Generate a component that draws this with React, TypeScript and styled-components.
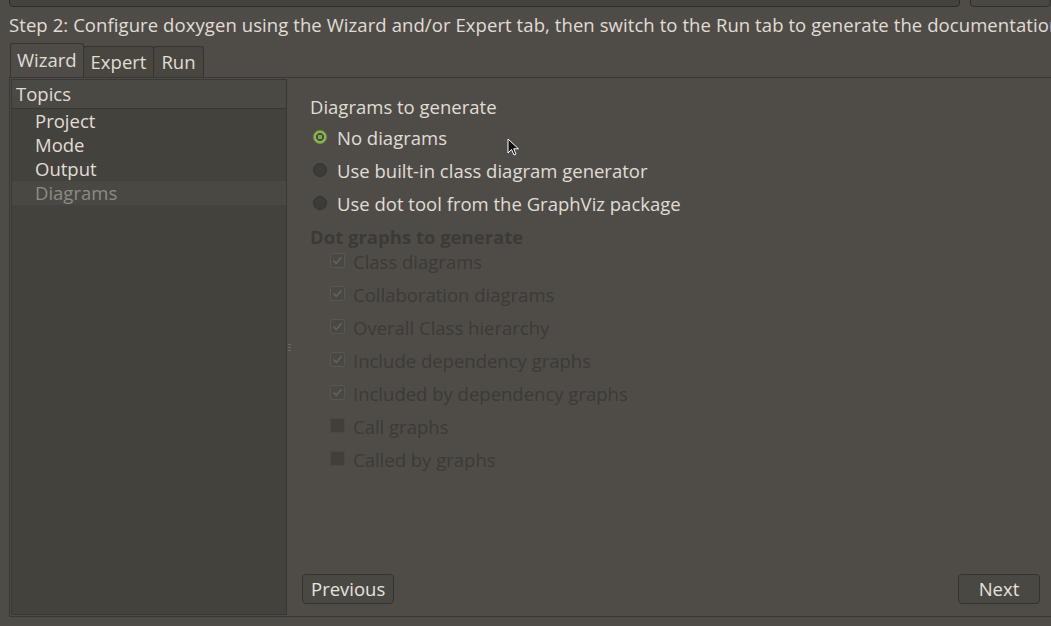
import React from "react";
import styled, { createGlobalStyle } from "styled-components";

const GlobalStyle = createGlobalStyle`
  html, body { margin: 0; padding: 0; background: #4f4c47; }
  body { font-family: "Open Sans", "Noto Sans", sans-serif; color: #e0ddd5; }
  * { box-sizing: border-box; }
`;

const Window = styled.div`
  position: relative;
  width: 1051px;
  height: 626px;
  overflow: hidden;
  background: #4f4c47;
  display: flex;
  flex-direction: column;
  padding-left: 9px;
  font-size: 18.5px;
`;

const TopRow = styled.div`
  height: 7px;
  display: flex;
  align-items: flex-end;
  gap: 10px;
  overflow: hidden;
`;

const PathField = styled.div`
  flex: none;
  width: 951px;
  height: 30px;
  border: 1px solid #2f2d29;
  border-radius: 4px;
  background: #45433e;
`;

const TopButton = styled.div`
  flex: none;
  width: 81px;
  height: 30px;
  border: 1px solid #2f2d29;
  border-radius: 4px;
  background: #4a4843;
`;

const StepLabel = styled.div`
  height: 36px;
  line-height: 36px;
  white-space: nowrap;
  letter-spacing: 0.08px;
`;

const TabBar = styled.div`
  display: flex;
  align-items: flex-end;
  height: 34px;
  padding-left: 1px;
`;

const Tab = styled.div<{ $active?: boolean }>`
  height: ${(p) => (p.$active ? 34 : 31)}px;
  padding: 0 ${(p) => (p.$active ? 6 : 7)}px;
  line-height: ${(p) => (p.$active ? 32 : 29)}px;
  background: ${(p) => (p.$active ? "#4f4c47" : "#48463f")};
  border: 1px solid #363430;
  border-bottom: none;
  border-radius: 3px 3px 0 0;
  margin-right: -1px;
  white-space: nowrap;
`;

const Pane = styled.div`
  height: 540px;
  display: flex;
  border: 1px solid #393733;
  border-right: none;
  padding: 1px 0 1px 1px;
`;

const Sidebar = styled.div`
  width: 276px;
  flex: none;
  background: #44423d;
  border: 1px solid #3a3834;
  display: flex;
  flex-direction: column;
`;

const SidebarHeader = styled.div`
  height: 29px;
  line-height: 28px;
  padding-left: 4px;
  background: #4b4944;
  border-bottom: 1px solid #393732;
`;

const TopicList = styled.div`
  display: flex;
  flex-direction: column;
`;

const TopicItem = styled.div<{ $selected?: boolean }>`
  height: 24px;
  line-height: 24px;
  padding-left: 23px;
  color: ${(p) => (p.$selected ? "#8e8b84" : "#e0ddd5")};
  background: ${(p) => (p.$selected ? "#4a4843" : "transparent")};
`;

const Splitter = styled.div`
  width: 14px;
  flex: none;
  display: flex;
  align-items: center;
  justify-content: flex-start;
  padding-left: 1px;
`;

const Grip = styled.div`
  width: 3px;
  height: 7px;
  background: repeating-linear-gradient(to bottom, #6a6760 0 1px, transparent 1px 3px);
`;

const Content = styled.div`
  flex: 1;
  display: flex;
  flex-direction: column;
  padding: 16px 10px 10px 1px;
`;

const Form = styled.div`
  display: flex;
  flex-direction: column;
  padding-left: 8px;
`;

const Heading = styled.div<{ $disabled?: boolean }>`
  height: ${(p) => (p.$disabled ? 19 : 26)}px;
  line-height: ${(p) => (p.$disabled ? 19 : 24)}px;
  margin-top: ${(p) => (p.$disabled ? 7 : 0)}px;
  margin-bottom: ${(p) => (p.$disabled ? -1 : 0)}px;
  font-weight: ${(p) => (p.$disabled ? 700 : 400)};
  color: ${(p) => (p.$disabled ? "#3c3a36" : "#e0ddd5")};
  white-space: nowrap;
`;

const OptionRow = styled.div<{ $indent?: number; $disabled?: boolean }>`
  height: 33px;
  display: flex;
  align-items: center;
  gap: ${(p) => (p.$disabled ? 8 : 10)}px;
  padding-left: ${(p) => p.$indent ?? 3}px;
  color: ${(p) => (p.$disabled ? "#3c3a36" : "#e0ddd5")};
  white-space: nowrap;
`;

const Radio = styled.span<{ $checked?: boolean }>`
  width: 14px;
  height: 14px;
  border-radius: 50%;
  flex: none;
  margin-top: -2px;
  background: ${(p) =>
    p.$checked
      ? "radial-gradient(circle, #7fa84b 0 2.5px, #4a4a3e 2.5px 4px, #8ab653 4px)"
      : "#3d3b37"};
  border: 1px solid ${(p) => (p.$checked ? "#6f9a3f" : "#35332f")};
`;

const CheckBox = styled.span<{ $checked?: boolean }>`
  width: 15px;
  height: 15px;
  flex: none;
  margin-top: -3px;
  border-radius: 2px;
  background: ${(p) => (p.$checked ? "#4a4843" : "#423f3b")};
  border: 1px solid ${(p) => (p.$checked ? "#5a5751" : "#4a4843")};
  display: flex;
  align-items: center;
  justify-content: center;
`;

const Spacer = styled.div`
  flex: 1;
`;

const ButtonRow = styled.div`
  display: flex;
  justify-content: space-between;
  align-items: center;
  padding-right: 1px;
  margin-bottom: 1px;
`;

const Button = styled.div`
  height: 30px;
  line-height: 28px;
  padding: 0 8px;
  border: 1px solid #34322e;
  border-radius: 4px;
  background: #4a4843;
  color: #e6e3db;
  min-width: 82px;
  text-align: center;
`;

const Cursor = styled.svg`
  position: absolute;
  left: 507px;
  top: 138px;
`;

const CheckMark = () => (
  <svg width="11" height="11" viewBox="0 0 11 11">
    <path d="M1.5 5.5 L4.3 8.3 L9.5 2.3" fill="none" stroke="#66635c" strokeWidth="1.5" />
  </svg>
);

const checks: [string, boolean][] = [
  ["Class diagrams", true],
  ["Collaboration diagrams", true],
  ["Overall Class hierarchy", true],
  ["Include dependency graphs", true],
  ["Included by dependency graphs", true],
  ["Call graphs", false],
  ["Called by graphs", false],
];

export default function App() {
  return (
    <>
      <GlobalStyle />
      <Window>
        <TopRow>
          <PathField />
          <TopButton />
        </TopRow>
        <StepLabel>
          Step 2: Configure doxygen using the Wizard and/or Expert tab, then switch to the Run tab to generate the documentation
        </StepLabel>
        <TabBar>
          <Tab $active>Wizard</Tab>
          <Tab>Expert</Tab>
          <Tab>Run</Tab>
        </TabBar>
        <Pane>
          <Sidebar>
            <SidebarHeader>Topics</SidebarHeader>
            <TopicList>
              <TopicItem>Project</TopicItem>
              <TopicItem>Mode</TopicItem>
              <TopicItem>Output</TopicItem>
              <TopicItem $selected>Diagrams</TopicItem>
            </TopicList>
          </Sidebar>
          <Splitter>
            <Grip />
          </Splitter>
          <Content>
            <Form>
              <Heading>Diagrams to generate</Heading>
              <OptionRow>
                <Radio $checked />
                No diagrams
              </OptionRow>
              <OptionRow>
                <Radio />
                Use built-in class diagram generator
              </OptionRow>
              <OptionRow>
                <Radio />
                Use dot tool from the GraphViz package
              </OptionRow>
              <Heading $disabled>Dot graphs to generate</Heading>
              {checks.map(([label, on]) => (
                <OptionRow key={label} $indent={20} $disabled>
                  <CheckBox $checked={on}>{on && <CheckMark />}</CheckBox>
                  {label}
                </OptionRow>
              ))}
            </Form>
            <Spacer />
            <ButtonRow>
              <Button>Previous</Button>
              <Button>Next</Button>
            </ButtonRow>
          </Content>
        </Pane>
        <Cursor width="14" height="20" viewBox="0 0 14 20">
          <path d="M1 1 L1 15 L4.5 11.5 L7 17 L9 16 L6.7 10.8 L11.5 10.8 Z" fill="#111" stroke="#fff" strokeWidth="1" />
        </Cursor>
      </Window>
    </>
  );
}
